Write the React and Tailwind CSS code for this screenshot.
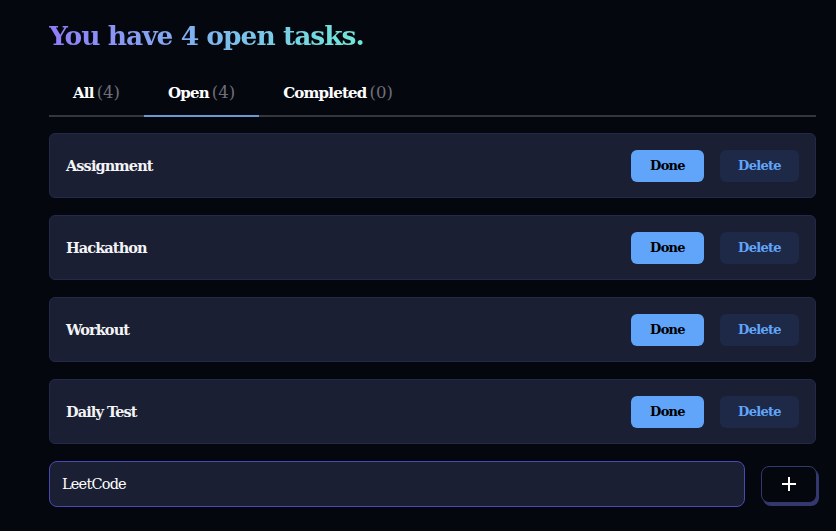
import React, { useState } from "react";

const tasks = [
  { id: 1, title: "Assignment" },
  { id: 2, title: "Hackathon" },
  { id: 3, title: "Workout" },
  { id: 4, title: "Daily Test" },
];

const tabs = [
  { key: "all", label: "All", count: 4 },
  { key: "open", label: "Open", count: 4 },
  { key: "completed", label: "Completed", count: 0 },
];

const App = () => {
  const [active, setActive] = useState("open");
  const [text, setText] = useState("LeetCode");

  return (
    <div className="min-h-screen bg-[#05070f] pl-[49px] pr-[20px] pt-[14px] text-white font-['DejaVu_Serif','Liberation_Serif',serif]">
      <h1 className="text-[26.5px] font-bold leading-[44px] tracking-[-1px] bg-gradient-to-r from-[#8f7cf6] via-[#7eb6ef] to-[#6fe9d6] bg-clip-text text-transparent w-fit">
        You have 4 open tasks.
      </h1>

      {/* tabs */}
      <div className="mt-[13px] flex border-b-2 border-[#34363d]">
        {tabs.map((t) => (
          <button
            key={t.key}
            onClick={() => setActive(t.key)}
            className={`-mb-[2px] px-6 h-[46px] flex items-center text-[15px] font-bold tracking-[-0.8px] border-b-2 ${
              active === t.key ? "border-[#6b98d2]" : "border-transparent"
            }`}
          >
            {t.label}
            <span className="ml-[3px] text-[16.5px] font-normal tracking-normal text-[#6e7078]">
              ({t.count})
            </span>
          </button>
        ))}
      </div>

      {/* task list */}
      <div className="mt-[16px] flex flex-col gap-[17px]">
        {tasks.map((task) => (
          <div
            key={task.id}
            className="h-[65px] flex items-center justify-between rounded-[6px] border border-[#23294a] bg-[#1b1f33] px-4"
          >
            <span className="text-[14.5px] font-bold tracking-[-0.9px] text-[#f3f4f6]">
              {task.title}
            </span>
            <div className="flex items-center gap-4">
              <button className="w-[73px] h-[32px] rounded-[6px] bg-[#60a5fa] text-[13px] font-bold tracking-[-0.7px] text-black">
                Done
              </button>
              <button className="w-[79px] h-[32px] rounded-[6px] bg-[#1e2847] text-[13px] font-bold tracking-[-0.7px] text-[#60a5fa]">
                Delete
              </button>
            </div>
          </div>
        ))}
      </div>

      {/* add task */}
      <div className="mt-[17px] flex items-center gap-4">
        <input
          value={text}
          onChange={(e) => setText(e.target.value)}
          className="shrink-0 w-[696px] h-[46px] rounded-[8px] border border-[#4a48b5] bg-[#1b1f33] px-3 text-[14.5px] tracking-[-0.8px] text-white outline-none font-['DejaVu_Serif','Liberation_Serif',serif]"
        />
        <button className="shrink-0 w-[56px] h-[37px] rounded-[8px] border border-[#34386e] bg-[#05070f] shadow-[2px_3px_0_#34386e] flex items-center justify-center">
          <svg width="14" height="14" viewBox="0 0 14 14">
            <path d="M7 0v14M0 7h14" stroke="white" strokeWidth="2" />
          </svg>
        </button>
      </div>
    </div>
  );
};

export default App;
